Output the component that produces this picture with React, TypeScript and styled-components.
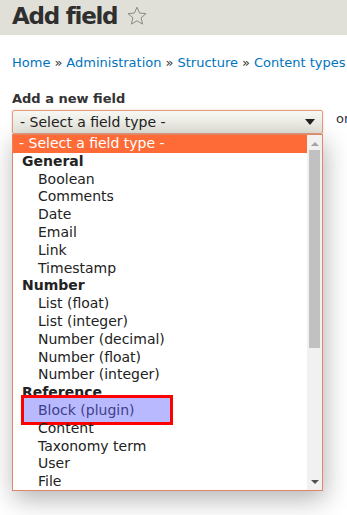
import React from "react";
import styled, { createGlobalStyle } from "styled-components";

const GlobalStyle = createGlobalStyle`
  body {
    margin: 0;
    background: #ffffff;
    font-family: "DejaVu Sans", "Liberation Sans", sans-serif;
    color: #222222;
  }
`;

const Page = styled.div`
  width: 347px;
  height: 515px;
  overflow: hidden;
`;

const Header = styled.div`
  height: 35px;
  box-sizing: border-box;
  padding: 0 0 3px 12px;
  background-color: #e0e0d8;
  display: flex;
  align-items: flex-start;
`;

const Title = styled.h1`
  margin: 0;
  font-size: 23px;
  line-height: 32px;
  font-weight: bold;
  letter-spacing: -1.25px;
  color: #2f2f2f;
`;

const StarButton = styled.span`
  margin: 6px 0 0 10px;
  display: flex;
`;

const Main = styled.div`
  padding: 0 12px;
`;

const Breadcrumb = styled.div`
  margin-top: 20px;
  font-size: 13px;
  line-height: 15px;
  white-space: nowrap;
  color: #333;
`;

const Crumb = styled.a`
  color: #0074bd;
  text-decoration: none;
`;

const Sep = styled.span`
  color: #333;
  margin: 0 4px;
`;

const Label = styled.label`
  display: block;
  margin-top: 21px;
  font-size: 13px;
  line-height: 15px;
  font-weight: bold;
  color: #333;
`;

const FieldRow = styled.div`
  margin-top: 4px;
  display: flex;
  align-items: flex-start;
  gap: 13px;
  white-space: nowrap;
`;

const SelectWrap = styled.div`
  width: 311px;
  flex-shrink: 0;
  display: flex;
  flex-direction: column;
`;

const SelectBox = styled.div`
  height: 24px;
  box-sizing: border-box;
  border: 1px solid #e59c80;
  border-radius: 2px;
  background: linear-gradient(#f7f7f3, #e6e6dd);
  box-shadow: 0 0 2px rgba(240, 120, 80, 0.4);
  padding: 0 7px;
  display: flex;
  align-items: center;
  justify-content: space-between;
  font-size: 14px;
  color: #222;
`;

const Caret = styled.span`
  width: 0;
  height: 0;
  border-left: 5px solid transparent;
  border-right: 5px solid transparent;
  border-top: 6px solid #222;
`;

const Or = styled.span`
  margin-top: 1px;
  font-size: 13px;
  color: #333;
`;

const Popup = styled.div`
  width: 311px;
  height: 357px;
  box-sizing: border-box;
  border: 1px solid #e0876a;
  background: #fff;
  box-shadow: 2px 8px 24px rgba(0, 0, 0, 0.3);
  display: flex;
  overflow: hidden;
`;

const List = styled.div`
  flex: 1;
`;

const Row = styled.div<{ $kind: "selected" | "group" | "option" }>`
  position: relative;
  height: 17.8px;
  line-height: 16px;
  font-size: 14px;
  white-space: nowrap;
  padding-left: ${(p) => (p.$kind === "selected" ? "6px" : p.$kind === "group" ? "9px" : "25px")};
  font-weight: ${(p) => (p.$kind === "group" ? "bold" : "normal")};
  background: ${(p) => (p.$kind === "selected" ? "#ff6b36" : "transparent")};
  color: ${(p) => (p.$kind === "selected" ? "#ffffff" : "#222222")};
`;

const Marker = styled.span`
  position: absolute;
  left: 8px;
  top: -7px;
  width: 152px;
  height: 30px;
  box-sizing: border-box;
  border: 3px solid #ff0000;
  background: rgba(100, 100, 255, 0.45);
`;

const Scrollbar = styled.div`
  width: 15px;
  background: #f1f1f1;
  display: flex;
  flex-direction: column;
  align-items: center;
`;

const Arrow = styled.span<{ $up?: boolean; $color: string }>`
  width: 0;
  height: 0;
  margin-top: ${(p) => (p.$up ? "7px" : "auto")};
  margin-bottom: ${(p) => (p.$up ? "0" : "6px")};
  border-left: 4px solid transparent;
  border-right: 4px solid transparent;
  ${(p) =>
    p.$up
      ? `border-bottom: 4px solid ${p.$color};`
      : `border-top: 4px solid ${p.$color};`}
`;

const Thumb = styled.span`
  margin-top: 4px;
  width: 11px;
  height: 198px;
  background: #c1c1c1;
`;

type Item = { label: string; kind: "selected" | "group" | "option"; marked?: boolean };

const items: Item[] = [
  { label: "- Select a field type -", kind: "selected" },
  { label: "General", kind: "group" },
  { label: "Boolean", kind: "option" },
  { label: "Comments", kind: "option" },
  { label: "Date", kind: "option" },
  { label: "Email", kind: "option" },
  { label: "Link", kind: "option" },
  { label: "Timestamp", kind: "option" },
  { label: "Number", kind: "group" },
  { label: "List (float)", kind: "option" },
  { label: "List (integer)", kind: "option" },
  { label: "Number (decimal)", kind: "option" },
  { label: "Number (float)", kind: "option" },
  { label: "Number (integer)", kind: "option" },
  { label: "Reference", kind: "group" },
  { label: "Block (plugin)", kind: "option", marked: true },
  { label: "Content", kind: "option" },
  { label: "Taxonomy term", kind: "option" },
  { label: "User", kind: "option" },
  { label: "File", kind: "option" },
];

const crumbs = ["Home", "Administration", "Structure", "Content types"];

function Star() {
  return (
    <svg width="20" height="20" viewBox="0 0 20 20">
      <path
        d="M10 1.2 L12.6 7.1 L19 7.6 L14.1 11.8 L15.6 18.1 L10 14.8 L4.4 18.1 L5.9 11.8 L1 7.6 L7.4 7.1 Z"
        fill="none"
        stroke="#8c8c84"
        strokeWidth="1"
        strokeLinejoin="round"
      />
    </svg>
  );
}

export default function App() {
  return (
    <Page>
      <GlobalStyle />
      <Header>
        <Title>Add field</Title>
        <StarButton>
          <Star />
        </StarButton>
      </Header>
      <Main>
        <Breadcrumb>
          {crumbs.map((c, i) => (
            <React.Fragment key={c}>
              {i > 0 && <Sep>»</Sep>}
              <Crumb href="#">{c}</Crumb>
            </React.Fragment>
          ))}
        </Breadcrumb>
        <Label>Add a new field</Label>
        <FieldRow>
          <SelectWrap>
            <SelectBox>
              <span>- Select a field type -</span>
              <Caret />
            </SelectBox>
            <Popup>
              <List>
                {items.map((it) => (
                  <Row key={it.label} $kind={it.kind}>
                    {it.label}
                    {it.marked && <Marker />}
                  </Row>
                ))}
              </List>
              <Scrollbar>
                <Arrow $up $color="#a3a3a3" />
                <Thumb />
                <Arrow $color="#505050" />
              </Scrollbar>
            </Popup>
          </SelectWrap>
          <Or>or</Or>
        </FieldRow>
      </Main>
    </Page>
  );
}
